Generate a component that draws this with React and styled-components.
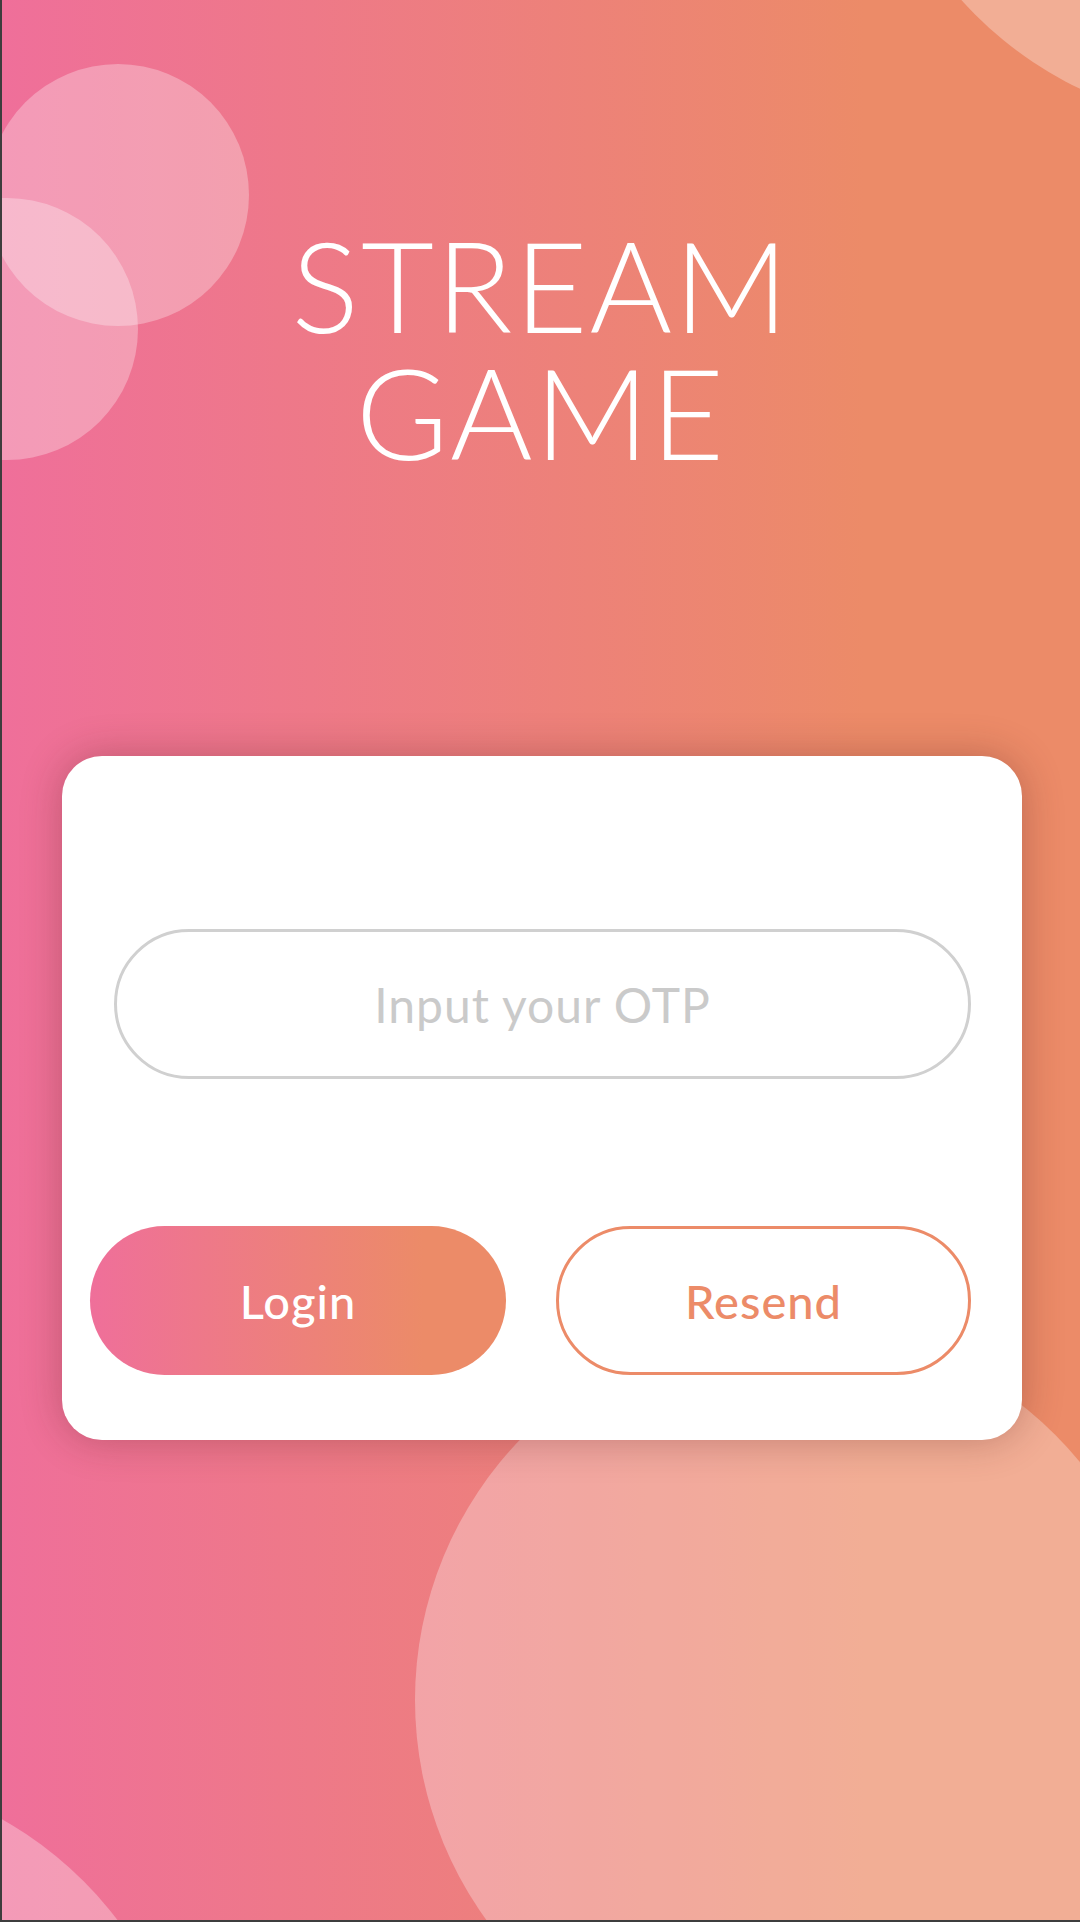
import React from "react";
import styled, { createGlobalStyle } from "styled-components";

const Global = createGlobalStyle`
  html, body { margin: 0; padding: 0; background: #3d3d3d; }
  body { font-family: "Lato", "Open Sans", sans-serif; }
  * { box-sizing: border-box; }
`;

const Screen = styled.div`
  position: relative;
  margin-left: 2px;
  width: 1078px;
  height: 1920px;
  overflow: hidden;
  background: linear-gradient(90deg, #ef6f9a 0%, #ec8b68 80%, #ec8b68 100%);
  display: flex;
  flex-direction: column;
  align-items: center;
  padding-top: 221px;
`;

const Bubble = styled.div`
  position: absolute;
  left: ${(p) => p.$x - p.$r}px;
  top: ${(p) => p.$y - p.$r}px;
  width: ${(p) => p.$r * 2}px;
  height: ${(p) => p.$r * 2}px;
  border-radius: 50%;
  background: rgba(255, 255, 255, 0.3);
  pointer-events: none;
`;

const Title = styled.h1`
  position: relative;
  margin: 0;
  font-family: "Lato", "Open Sans", sans-serif;
  font-weight: 300;
  font-size: 126px;
  line-height: 127px;
  color: #ffffff;
  text-align: center;
  letter-spacing: 2px;
`;

const Card = styled.div`
  position: relative;
  margin-top: 281px;
  margin-left: 2px;
  width: 960px;
  height: 684px;
  background: #ffffff;
  border-radius: 40px;
  box-shadow: 0 0 40px rgba(90, 30, 30, 0.32);
  padding: 173px 51px 65px 28px;
  display: flex;
  flex-direction: column;
  align-items: center;
`;

const OtpInput = styled.input`
  width: 857px;
  height: 150px;
  margin-left: 24px;
  border: 3px solid #d0d0d0;
  border-radius: 75px;
  background: #fff;
  outline: none;
  text-align: center;
  font-family: "Lato", "Open Sans", sans-serif;
  font-size: 48px;
  color: #555;
  &::placeholder {
    color: #cacaca;
    letter-spacing: 1px;
  }
`;

const ButtonRow = styled.div`
  margin-top: 147px;
  width: 100%;
  display: flex;
  gap: 50px;
`;

const PillButton = styled.button`
  flex: 0 0 ${(p) => p.$w}px;
  height: 149px;
  border-radius: 75px;
  font-family: "Lato", "Open Sans", sans-serif;
  font-size: 47px;
  font-weight: 500;
  letter-spacing: 1px;
  cursor: pointer;
  border: ${(p) => (p.$outline ? "3px solid #ec8b68" : "none")};
  color: ${(p) => (p.$outline ? "#ec8b68" : "#ffffff")};
  background: ${(p) =>
    p.$outline
      ? "#ffffff"
      : "linear-gradient(90deg, #ef6f9a 0%, #ec8b68 80%, #ec8b68 100%)"};
`;

export default function App() {
  return (
    <>
      <Global />
      <Screen>
        <Bubble $x={116} $y={195} $r={131} />
        <Bubble $x={5} $y={329} $r={131} />
        <Bubble $x={1242} $y={-254} $r={380} />
        <Bubble $x={788} $y={1700} $r={375} />
        <Bubble $x={-187} $y={2150} $r={380} />
        <Title>
          STREAM
          <br />
          GAME
        </Title>
        <Card>
          <OtpInput placeholder="Input your OTP" />
          <ButtonRow>
            <PillButton $w={416}>Login</PillButton>
            <PillButton $w={415} $outline>
              Resend
            </PillButton>
          </ButtonRow>
        </Card>
      </Screen>
    </>
  );
}
